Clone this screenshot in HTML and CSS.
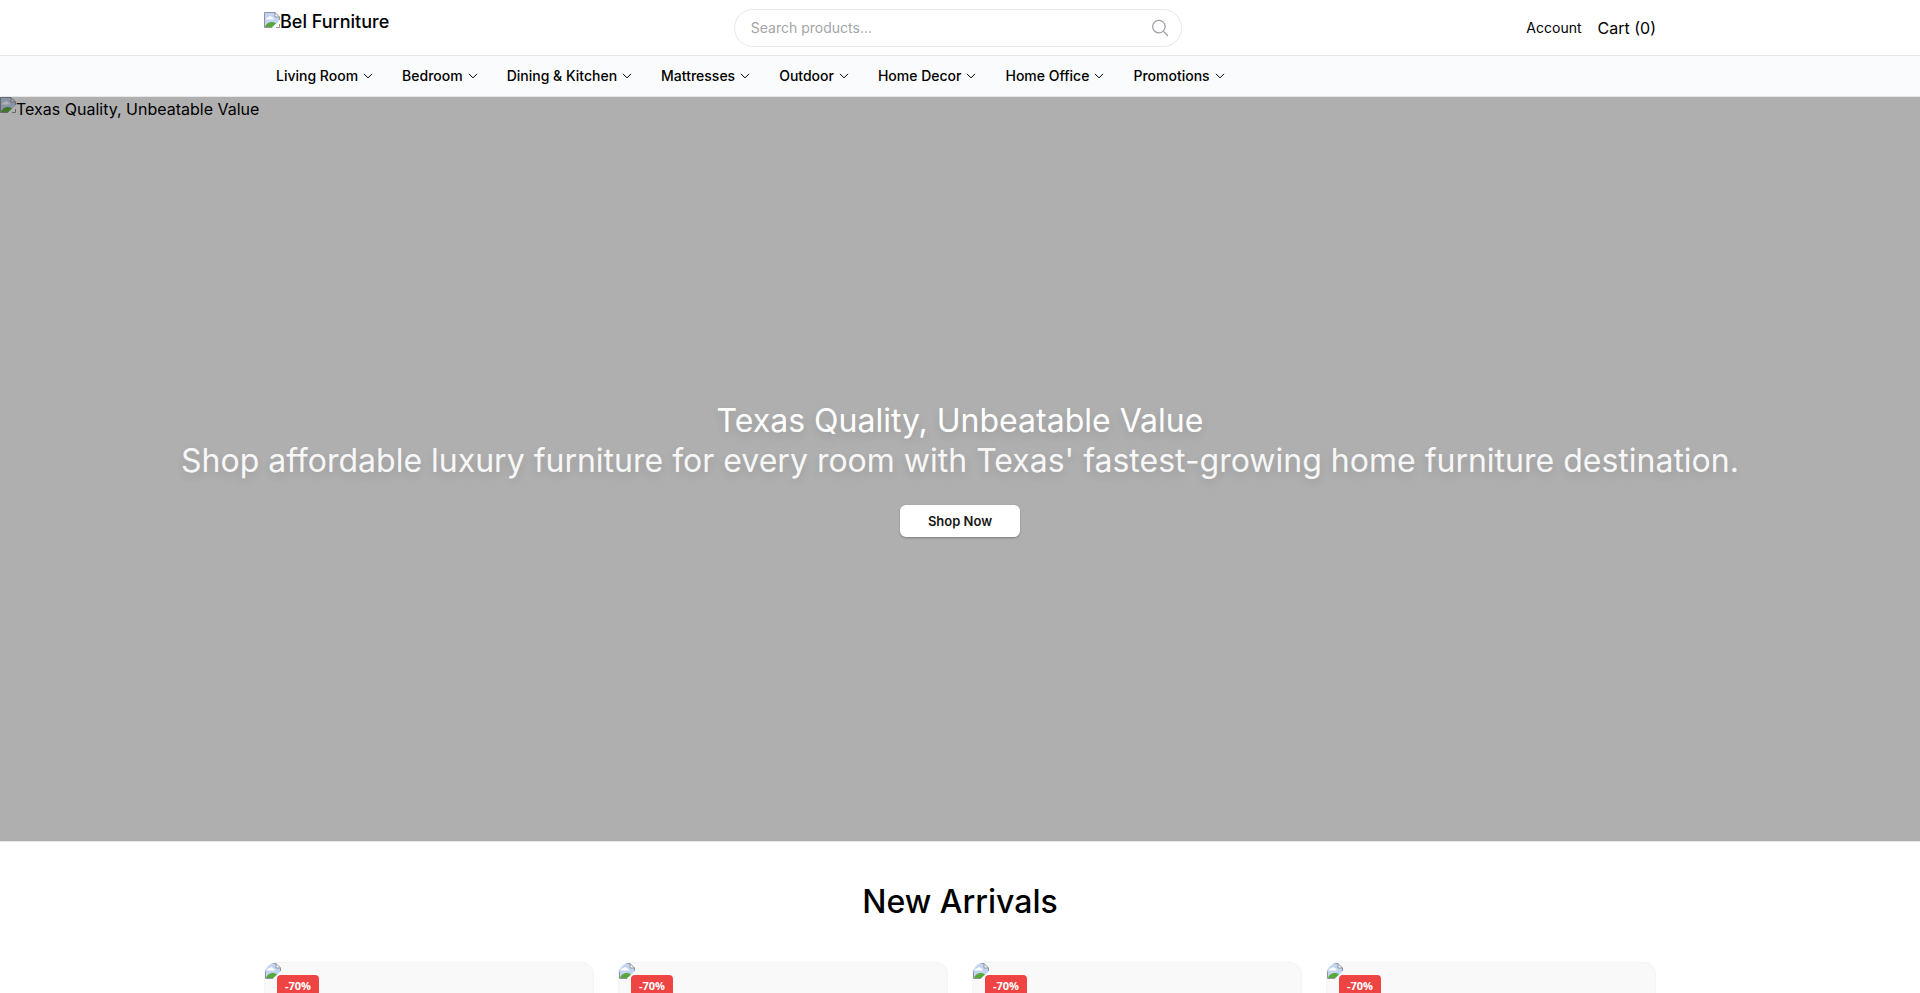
FILE: index.html
```html
<!DOCTYPE html>
<html lang="en">
<head>
    <meta charset="UTF-8">
    <meta name="viewport" content="width=device-width, initial-scale=1.0">
    <title>Bel Furniture</title>
    <link rel="stylesheet" href="styles.css">
</head>
<body>
    <!-- shared icons -->
    <svg class="sprite" aria-hidden="true">
        <symbol id="icon-image" viewBox="0 0 16 16">
            <path d="M0.5 0.5H11L15.5 5V9L8.5 15.5H0.5Z" fill="#c3d4f3"/>
            <path d="M2 7.5C2 5.6 3.6 5 4.5 5.4C5 3.8 7.6 3.8 8 5.6C9.4 5.4 10 6.6 9.6 7.5Z" fill="#fff"/>
            <path d="M1 15C2 11.5 5 10 8 10C9.6 10 11 10.6 12 11.4L8.3 15Z" fill="#5aa83c"/>
            <path d="M8 16L16 8V11L11 16Z" fill="#fff"/>
            <path d="M11 0.5V5H15.5Z" fill="#fff"/>
            <path d="M8 15.5H0.5V0.5H11L15.5 5V8M11 0.5V5H15.5M12 15.5H15.5V12" fill="none" stroke="#8f959d"/>
        </symbol>
        <symbol id="icon-chevron" viewBox="0 0 24 24">
            <path d="M19.5 8.25l-7.5 7.5-7.5-7.5" fill="none" stroke="currentColor" stroke-width="2" stroke-linecap="round" stroke-linejoin="round"/>
        </symbol>
        <symbol id="icon-search" viewBox="0 0 24 24">
            <path d="M21 21l-5.2-5.2m0 0A7.5 7.5 0 1 0 5.2 5.2a7.5 7.5 0 0 0 10.6 10.6z" fill="none" stroke="currentColor" stroke-width="1.5" stroke-linecap="round" stroke-linejoin="round"/>
        </symbol>
    </svg>

    <header class="header">
        <div class="container header-inner">
            <a class="logo" href="#"><svg class="image-icon"><use href="#icon-image"/></svg>Bel Furniture</a>
            <form class="search">
                <input type="search" placeholder="Search products..." aria-label="Search products">
                <button type="submit" aria-label="Search"><svg><use href="#icon-search"/></svg></button>
            </form>
            <div class="user-links">
                <a class="account" href="#">Account</a>
                <a href="#">Cart (0)</a>
            </div>
        </div>
    </header>

    <nav class="nav">
        <div class="container nav-inner">
            <button type="button">Living Room<svg><use href="#icon-chevron"/></svg></button>
            <button type="button">Bedroom<svg><use href="#icon-chevron"/></svg></button>
            <button type="button">Dining &amp; Kitchen<svg><use href="#icon-chevron"/></svg></button>
            <button type="button">Mattresses<svg><use href="#icon-chevron"/></svg></button>
            <button type="button">Outdoor<svg><use href="#icon-chevron"/></svg></button>
            <button type="button">Home Decor<svg><use href="#icon-chevron"/></svg></button>
            <button type="button">Home Office<svg><use href="#icon-chevron"/></svg></button>
            <button type="button">Promotions<svg><use href="#icon-chevron"/></svg></button>
        </div>
    </nav>

    <main>
        <section class="hero">
            <div class="hero-image"><svg class="image-icon"><use href="#icon-image"/></svg>Texas Quality, Unbeatable Value</div>
            <div class="hero-content">
                <h1>Texas Quality, Unbeatable Value</h1>
                <p>Shop affordable luxury furniture for every room with Texas' fastest-growing home furniture destination.</p>
                <a class="shop-button" href="#new-arrivals">Shop Now</a>
            </div>
        </section>

        <section class="container arrivals" id="new-arrivals">
            <h2>New Arrivals</h2>
            <div class="product-grid">
                <article class="product-card">
                    <svg class="image-icon"><use href="#icon-image"/></svg>
                    <span class="badge">-70%</span>
                </article>
                <article class="product-card">
                    <svg class="image-icon"><use href="#icon-image"/></svg>
                    <span class="badge">-70%</span>
                </article>
                <article class="product-card">
                    <svg class="image-icon"><use href="#icon-image"/></svg>
                    <span class="badge">-70%</span>
                </article>
                <article class="product-card">
                    <svg class="image-icon"><use href="#icon-image"/></svg>
                    <span class="badge">-70%</span>
                </article>
            </div>
        </section>
    </main>
</body>
</html>
```
FILE: styles.css
```css
* {
    box-sizing: border-box;
}

body {
    margin: 0;
    font-family: Inter, "Liberation Sans", sans-serif;
    font-size: 16px;
    line-height: 24px;
    color: #000;
    background-color: #fff;
    overflow-x: hidden;
}

a {
    color: inherit;
    text-decoration: none;
}

button, input {
    font: inherit;
    color: inherit;
}

h1, h2, p {
    margin: 0;
}

.sprite {
    display: none;
}

.container {
    max-width: 1440px;
    margin: 0 auto;
    padding: 0 24px;
}

.image-icon {
    width: 16px;
    height: 16px;
    flex: none;
}

/* Header */
.header {
    border-bottom: 1px solid #e5e7eb;
}

.header-inner {
    display: flex;
    justify-content: space-between;
    align-items: center;
    height: 55px;
}

.logo {
    display: flex;
    height: 32px;
    font-size: 18px;
    line-height: 20px;
    font-weight: 500;
}

.search {
    display: flex;
    align-items: center;
    width: 448px;
    height: 38px;
    padding: 0 11px 0 16px;
    border: 1px solid #e5e7eb;
    border-radius: 20px;
}

.search input {
    flex: 1;
    min-width: 0;
    padding: 0;
    border: none;
    outline: none;
    background: none;
    font-size: 14px;
    line-height: 20px;
}

.search input::placeholder {
    color: #a3a5a8;
}

.search button {
    display: flex;
    padding: 0;
    border: none;
    background: none;
    color: #9a9ea3;
    cursor: pointer;
}

.search svg {
    width: 20px;
    height: 20px;
}

.user-links {
    display: flex;
    align-items: center;
    gap: 16px;
}

.account {
    font-size: 14px;
}

/* Navigation */
.nav {
    background-color: #fafbfc;
    border-bottom: 1px solid #e5e7eb;
}

.nav-inner {
    display: flex;
    gap: 4px;
}

.nav button {
    display: flex;
    align-items: center;
    gap: 4px;
    padding: 10px 12px;
    border: none;
    background: none;
    font-size: 14px;
    line-height: 20px;
    font-weight: 500;
    cursor: pointer;
}

.nav svg {
    width: 12px;
    height: 12px;
}

/* Hero */
.hero {
    position: relative;
    display: flex;
    align-items: center;
    justify-content: center;
    height: 75vh;
    border-bottom: 1px solid #e5e7eb;
    background-color: #afafaf;
}

.hero-image {
    position: absolute;
    top: 0;
    left: 0;
    display: flex;
}

.hero-image .image-icon {
    filter: brightness(0.7);
}

.hero-content {
    text-align: center;
    color: #fff;
}

.hero h1, .hero p {
    font-size: 32px;
    line-height: 40px;
    font-weight: 400;
    text-shadow: 0 4px 8px rgba(0, 0, 0, 0.12);
}

.hero p {
    color: #f7f7f7;
}

.shop-button {
    display: inline-block;
    margin-top: 24px;
    padding: 4px 28px;
    border-radius: 6px;
    background-color: #fff;
    color: #171717;
    font-size: 13px;
    font-weight: 600;
    box-shadow: 0 1px 2px rgba(0, 0, 0, 0.3);
}

/* New arrivals */
.arrivals {
    padding-top: 40px;
}

.arrivals h2 {
    margin-bottom: 40px;
    font-size: 32px;
    line-height: 40px;
    font-weight: 500;
    text-align: center;
}

.product-grid {
    display: grid;
    grid-template-columns: repeat(4, 1fr);
    gap: 24px;
}

.product-card {
    position: relative;
    aspect-ratio: 1;
    border: 1px solid #f3f4f6;
    border-radius: 12px;
    background-color: #f9f9f9;
    overflow: hidden;
}

.product-card .image-icon {
    display: block;
}

.badge {
    position: absolute;
    top: 12px;
    left: 12px;
    padding: 2px 8px;
    border-radius: 4px;
    background-color: #ef4444;
    color: #fff;
    font-family: "Open Sans", "Noto Sans", sans-serif;
    font-size: 11px;
    line-height: 18px;
    font-weight: 700;
}
```
